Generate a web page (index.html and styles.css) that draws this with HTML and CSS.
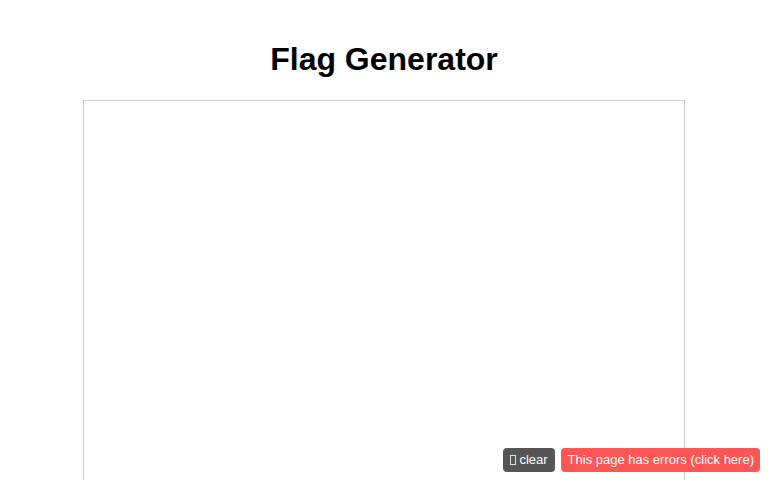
FILE: index.html
```html
<!DOCTYPE html>
<html>
<head>
<meta charset="utf-8">
<title>Flag Generator</title>
<link rel="stylesheet" href="styles.css">
</head>
<body>
<h1 class="title">Flag Generator</h1>
<div class="canvas"></div>
<div class="errbar">
  <button class="btn btn-clear"><span class="tofu"></span> clear</button>
  <button class="btn btn-error">This page has errors (click here)</button>
</div>
</body>
</html>
```
FILE: styles.css
```css
html, body {
  margin: 0;
  padding: 0;
  background: #fff;
  font-family: "Liberation Sans", Arial, sans-serif;
  overflow: hidden;
}
.title {
  margin: 41px 0 22px;
  font-size: 32px;
  line-height: 37px;
  font-weight: bold;
  text-align: center;
  color: #000;
}
.canvas {
  width: 600px;
  height: 600px;
  margin: 0 auto;
  border: 1px solid #ccc;
}
.errbar {
  position: fixed;
  right: 8px;
  bottom: 8px;
  display: flex;
  gap: 6px;
}
.btn {
  font-family: "Liberation Sans", Arial, sans-serif;
  font-size: 13px;
  line-height: 16px;
  height: 24px;
  padding: 4px 7px;
  border: none;
  border-radius: 4px;
  color: #fff;
  cursor: pointer;
}
.btn-clear {
  background: #555;
}
.btn-error {
  background: #f55;
  padding: 4px 6px 4px 7px;
}
.tofu {
  display: inline-block;
  width: 4px;
  height: 8px;
  border: 1px solid #ddd;
  vertical-align: -1px;
}
```
